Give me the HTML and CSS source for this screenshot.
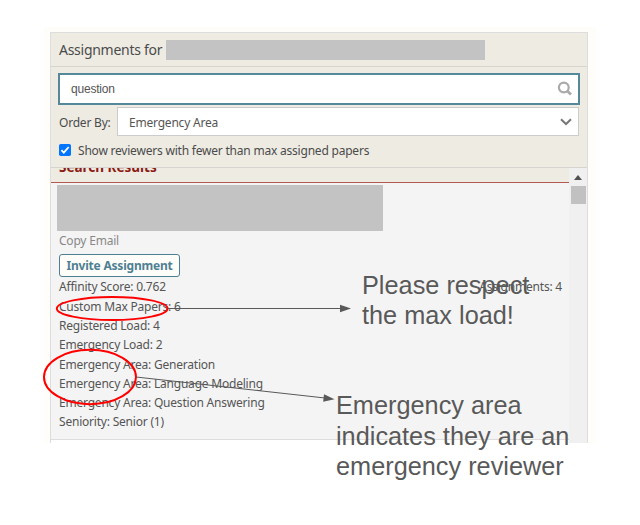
FILE: index.html
```html
<!DOCTYPE html>
<html lang="en">
<head>
<meta charset="utf-8">
<title>Assignments</title>
<link rel="stylesheet" href="styles.css">
</head>
<body>
<div class="page">
  <main class="panel">
    <header class="panel-header"><span class="panel-title">Assignments for</span><span class="redacted-name"></span></header>
    <section class="filters">
      <div class="search"><span>question</span>
        <svg width="16" height="16" viewBox="0 0 16 16" fill="none" stroke="#aaa"><circle cx="6.8" cy="6.5" r="4.9" stroke-width="2.2"/><path d="M10.3 10.1L14 13.6" stroke-width="2.8"/></svg>
      </div>
      <div class="order"><span class="order-label">Order By:</span>
        <div class="select"><span>Emergency Area</span>
          <svg width="12" height="8" viewBox="0 0 12 8" fill="none" stroke="#777" stroke-width="2"><path d="M1 1.2L6 6L11 1.2"/></svg>
        </div>
      </div>
      <div class="check">
        <svg width="12" height="12" viewBox="0 0 12 12"><rect width="12" height="12" rx="1.8" fill="#0075ff"/><path d="M2.4 6.2L4.8 8.6L9.7 3" fill="none" stroke="#fff" stroke-width="1.8"/></svg>
        <span>Show reviewers with fewer than max assigned papers</span>
      </div>
    </section>
    <section class="results">
      <div class="list">
        <h2 class="results-title"><span>Search Results</span></h2>
        <div class="redacted-profile"></div>
        <div class="copy">Copy Email</div>
        <div class="invite">Invite Assignment</div>
        <div class="details">
          <div class="row"><span>Affinity Score: 0.762</span><span>Assignments: 4</span></div>
          <div class="row">Custom Max Papers: 6</div>
          <div class="row">Registered Load: 4</div>
          <div class="row">Emergency Load: 2</div>
          <div class="row">Emergency Area: Generation</div>
          <div class="row">Emergency Area: Language Modeling</div>
          <div class="row">Emergency Area: Question Answering</div>
          <div class="row">Seniority: Senior (1)</div>
        </div>
        <div class="next-card"></div>
      </div>
      <div class="scrollbar">
        <svg width="8" height="5" viewBox="0 0 8 5"><path d="M0 5L4 0L8 5Z" fill="#505050"/></svg>
        <div class="thumb"></div>
      </div>
    </section>
  </main>
</div>
<svg class="marks" width="640" height="525" viewBox="0 0 640 525">
  <g fill="none" stroke="#f00" stroke-width="2">
    <ellipse cx="112.2" cy="308.5" rx="55.4" ry="11.5"/>
    <ellipse cx="90" cy="377" rx="46" ry="27.2"/>
  </g>
  <g fill="none" stroke="#595959"><path d="M168 308.5H341M136 377L325 398"/></g>
  <g fill="#595959"><path d="M340 304.7L351 308.5L340 312.2Z"/><path d="M324 394.3L334.5 399.2L323.2 401.8Z"/></g>
  <g class="note">
    <text x="362" y="294">Please respect</text>
    <text x="362" y="324">the max load!</text>
    <text x="336" y="414">Emergency area</text>
    <text x="336" y="445">indicates they are an</text>
    <text x="336" y="475">emergency reviewer</text>
  </g>
</svg>
</body>
</html>
```
FILE: styles.css
```css
* { box-sizing: border-box; }
body { margin: 0; width: 640px; height: 525px; overflow: hidden; background: #fff; color: #555; font: 12px/19.3px "Noto Sans", sans-serif; letter-spacing: -.21px; }
svg { display: block; flex: none; }
.page { width: 552px; height: 416px; margin: 27px 0 0 44px; padding: 5px 8px 0 6px; background: #fffdf9; }
.panel { display: flex; flex-direction: column; width: 538px; height: 411px; border: 1px solid #ddd; border-bottom: 0; background: #eeebe3; }
.panel-header { display: flex; align-items: center; flex: none; height: 34px; padding-left: 8px; border-bottom: 1px solid #d5d4ce; color: #4b4b4b; font-size: 14px; letter-spacing: -.27px; }
.panel-title { width: 107px; white-space: nowrap; }
.redacted-name { width: 319px; height: 20px; margin-top: 1px; background: #c3c3c3; }
.filters { flex: none; height: 101px; padding: 6px 7px 0; border-bottom: 1px solid #d5d4ce; }
.search { display: flex; align-items: center; justify-content: space-between; width: 522px; height: 32px; padding: 2px 5px 0 11px; border: 2px solid #55889a; background: #fff; font-family: "Liberation Sans", sans-serif; }
.search svg { margin-top: -2px; }
.order { display: flex; align-items: center; height: 29px; margin-top: 2px; padding-left: 1px; }
.order-label { width: 58px; padding-top: 2px; color: #4b4b4b; white-space: nowrap; }
.select { display: flex; align-items: center; justify-content: space-between; width: 462px; height: 29px; padding: 1px 6px 0 11px; border: 1px solid #ccc; background: #fff; }
.select span { padding-top: 1px; }
.check { display: flex; align-items: center; gap: 7px; height: 20px; margin-top: 4px; padding-left: 1px; color: #4b4b4b; }
.check span { padding-top: 1px; }
.results { display: flex; flex: 1; min-height: 0; }
.list { flex: 1; overflow: hidden; background: #f4f4f4; }
.results-title { display: flex; align-items: flex-start; height: 15px; margin: 0; padding-left: 8px; border-bottom: 1px solid #b25a52; background: #eeebe3; color: #8c1b13; font-size: 13.5px; line-height: 18px; letter-spacing: 0; overflow: hidden; }
.results-title span { margin-top: -10px; }
.redacted-profile { width: 326px; height: 46px; margin: 2px 0 0 6px; background: #c3c3c3; }
.copy { height: 19px; padding-left: 8px; color: #888; }
.invite { width: 121px; height: 23px; margin: 4px 0 0 8px; border: 1px solid #4d8093; border-radius: 3px; background: #fffdfa; color: #4d8093; font-weight: 700; line-height: 21px; text-align: center; white-space: nowrap; }
.details { padding: .4px 7px 0 8px; }
.row { display: flex; justify-content: space-between; height: 19.3px; }
.next-card { height: 4px; margin-top: 6.9px; border-top: 1px solid #ddd; background: #fff; }
.scrollbar { display: flex; flex-direction: column; align-items: center; width: 18px; padding-top: 7px; background: #f0f0f0; }
.thumb { width: 15px; height: 18px; margin-top: 6px; background: #c1c1c1; }
.marks { position: absolute; left: 0; top: 0; letter-spacing: 0; }
.note { fill: #595959; font: 25.3px "Liberation Sans", sans-serif; }
```
